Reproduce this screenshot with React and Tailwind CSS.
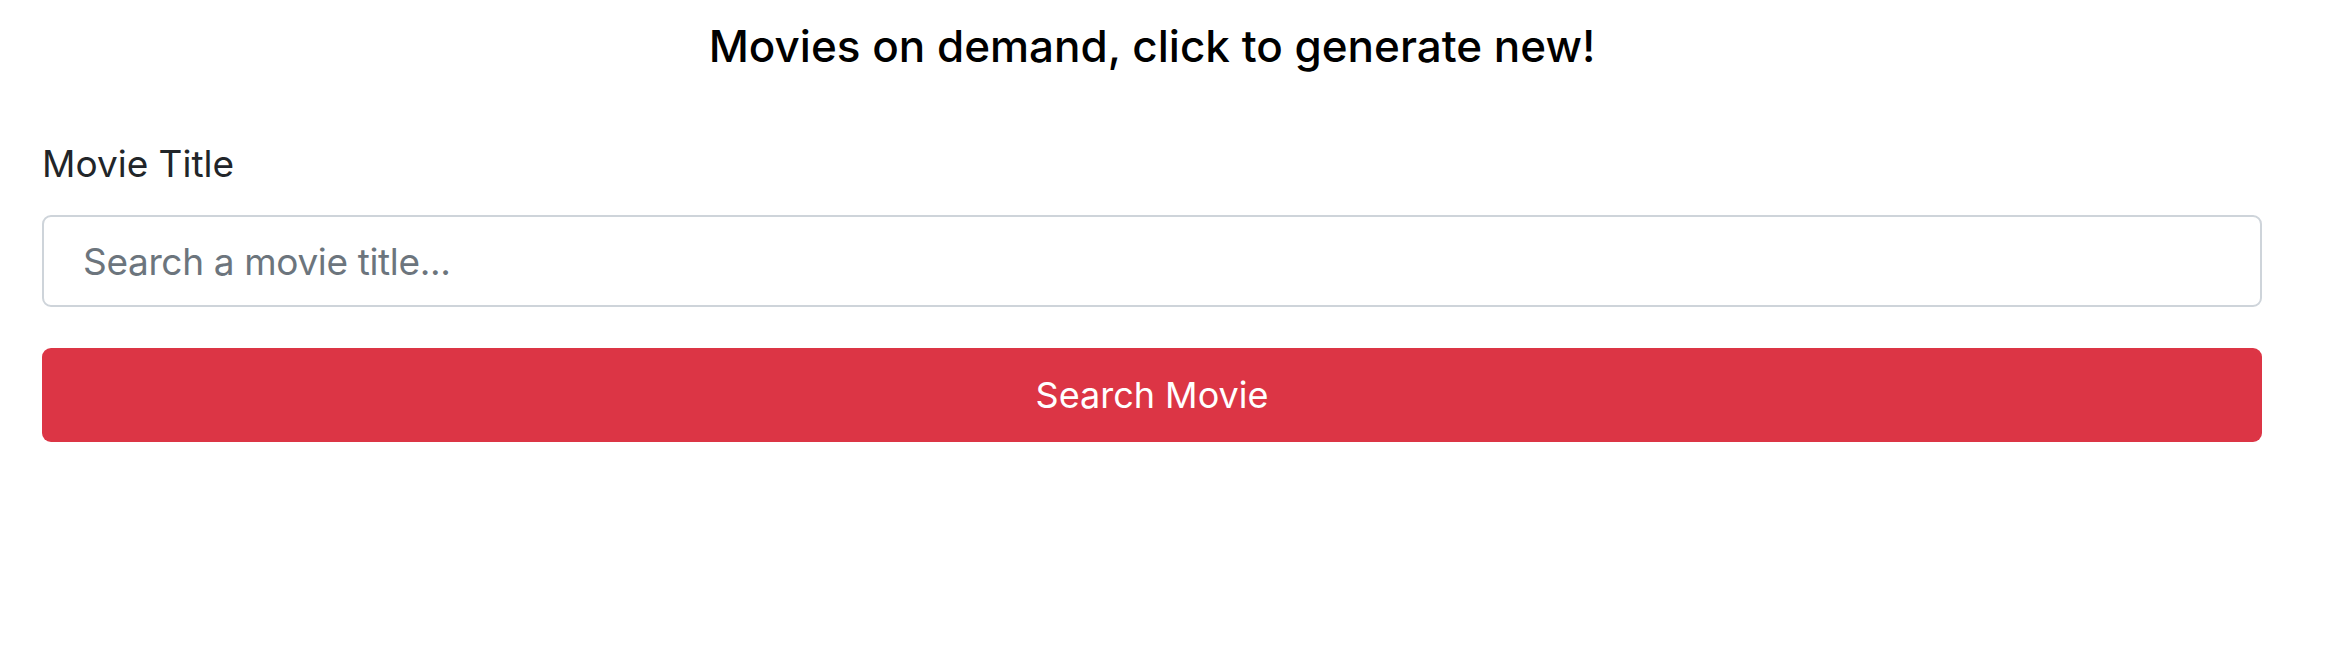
import React, { useState } from 'react';

function App() {
  const [title, setTitle] = useState('');

  const handleSubmit = (event) => {
    event.preventDefault();
  };

  return (
    <div className="min-h-[660px] bg-white pl-[42px] pr-[84px] font-['Inter','Liberation_Sans',sans-serif]">
      <h1 className="pt-[20px] text-center text-[44px] leading-[53px] font-medium text-black">
        Movies on demand, click to generate new!
      </h1>
      <form onSubmit={handleSubmit} className="mt-[62px]">
        <label htmlFor="title" className="block text-[37px] leading-[57px] text-[#212529]">
          Movie Title
        </label>
        <input
          id="title"
          type="text"
          value={title}
          onChange={(e) => setTitle(e.target.value)}
          placeholder="Search a movie title..."
          className="mt-[23px] block h-[92px] w-full rounded-[9px] border-2 border-[#ced4da] px-[39px] text-[37px] tracking-[-0.35px] text-[#495057] outline-none placeholder:text-[#6c757d]"
        />
        <button
          type="submit"
          className="mt-[41px] block h-[94px] w-full rounded-[9px] bg-[#dc3545] text-[36px] text-white"
        >
          Search Movie
        </button>
      </form>
    </div>
  );
}

export default App;
